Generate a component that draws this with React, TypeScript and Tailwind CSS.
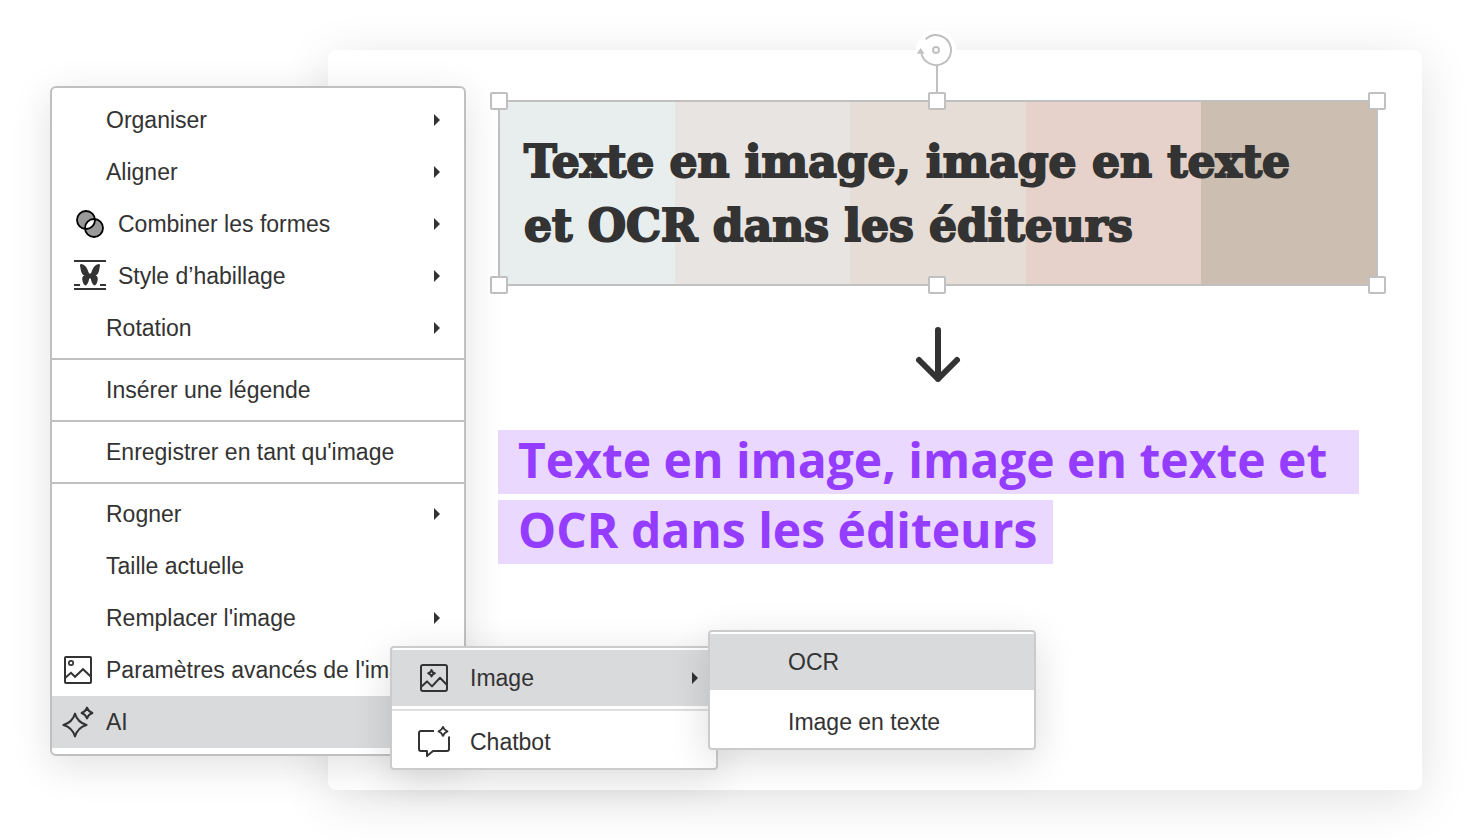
import type { ReactNode } from "react";

const STRIPES = ["bg-[#e8eeed]", "bg-[#e8e4e1]", "bg-[#e6ddd6]", "bg-[#e6d2cb]", "bg-[#ccbeb1]"];

const HANDLES = [
  "-top-[10px] -left-[10px]",
  "-top-[10px] left-[calc(50%-10px)]",
  "-top-[10px] -right-[10px]",
  "-bottom-[10px] -left-[10px]",
  "-bottom-[10px] left-[calc(50%-10px)]",
  "-bottom-[10px] -right-[10px]",
];

function CombineIcon() {
  return (
    <svg width="32" height="32" viewBox="0 0 32 32" aria-hidden="true">
      <circle cx="12" cy="12" r="9" fill="#999" />
      <circle cx="20" cy="20" r="9" fill="#999" />
      <path d="M11.1 20.9A9 9 0 0 1 20.9 11.1A9 9 0 0 1 11.1 20.9Z" fill="#fff" />
      <g fill="none" stroke="#000" strokeWidth="1.8">
        <circle cx="12" cy="12" r="9" />
        <circle cx="20" cy="20" r="9" />
      </g>
    </svg>
  );
}

function WrapIcon() {
  return (
    <svg width="32" height="32" viewBox="0 0 32 32" fill="#333" aria-hidden="true">
      <path d="M0 0h32v2H0zM0 28h32v2H0zM0 24h6v2H0zM26 24h6v2h-6z" />
      <path d="M14.6 12.6C13.4 8 10.5 4 7 4C5.4 4.2 6.1 6 6.5 8.2C7 11.6 7.8 14.6 10.4 15.2C8 16.2 8 18.5 8.5 20.8C9 23 10 25.6 11.5 25.6C13.5 24.6 15 21 15.2 18.4H16.8C17 21 18.5 24.6 20.5 25.6C22 25.6 23 23 23.5 20.8C24 18.5 24 16.2 21.6 15.2C24.2 14.6 25 11.6 25.5 8.2C25.9 6 26.6 4.2 25 4C21.5 4 18.6 8 17.4 12.6L16 14Z" />
    </svg>
  );
}

function PictureIcon() {
  return (
    <svg width="32" height="32" viewBox="0 0 32 32" fill="none" stroke="#333" strokeWidth="2" aria-hidden="true">
      <rect x="3" y="3" width="26" height="26" rx="1" />
      <circle cx="9" cy="9" r="2.2" strokeWidth="1.7" />
      <path d="M3 24L9 18.8L13 22.8L21 15.2L29 22.8" />
    </svg>
  );
}

function SparklesIcon() {
  return (
    <svg width="32" height="32" viewBox="0 0 32 32" fill="none" stroke="#333" strokeWidth="2" strokeLinejoin="round" aria-hidden="true">
      <path d="M13 7.6C14.8 13.8 17.8 17 24.6 19C17.8 21 14.8 24.2 13 30.4C11.2 24.2 8.2 21 1.4 19C8.2 17 11.2 13.8 13 7.6Z" />
      <path d="M25 1.6C26 4.6 27.4 6 30.4 7C27.4 8 26 9.4 25 12.4C24 9.4 22.6 8 19.6 7C22.6 6 24 4.6 25 1.6Z" />
    </svg>
  );
}

function AiPictureIcon() {
  return (
    <svg width="32" height="32" viewBox="0 0 32 32" fill="none" stroke="#333" strokeWidth="2" strokeLinejoin="round" aria-hidden="true">
      <rect x="3" y="3" width="26" height="26" rx="2" />
      <path d="M3 25L9 19.4L14 24.4L22 15.8L29 23" />
      <path d="M13.5 8C14 9.9 15 10.9 16.8 11.3C15 11.8 14 12.8 13.5 14.6C13 12.8 12 11.8 10.2 11.3C12 10.9 13 9.9 13.5 8Z" />
    </svg>
  );
}

function AiChatIcon() {
  return (
    <svg width="32" height="32" viewBox="0 0 32 32" fill="none" stroke="#333" strokeWidth="2" strokeLinejoin="round" aria-hidden="true">
      <path d="M16 5H3Q1 5 1 7V23Q1 25 3 25H9V30L15 25H29Q31 25 31 23V10.5" />
      <path d="M25 1C26 3.6 26.8 4.4 29.4 5.4C26.8 6.4 26 7.2 25 9.8C24 7.2 23.2 6.4 20.6 5.4C23.2 4.4 24 3.6 25 1Z" />
    </svg>
  );
}

function Caret() {
  return (
    <svg className="ml-auto shrink-0" width="6" height="12" viewBox="0 0 6 12" fill="#333" aria-hidden="true">
      <path d="M0 0L6 6L0 12Z" />
    </svg>
  );
}

type ItemProps = {
  label: string;
  icon?: ReactNode;
  caret?: boolean;
  indent?: boolean;
  active?: boolean;
};

function Item({ label, icon, caret, indent, active }: ItemProps) {
  return (
    <button
      type="button"
      role="menuitem"
      className={`flex h-[52px] w-full items-center gap-3 pr-6 text-left whitespace-nowrap ${indent ? "pl-[22px]" : "pl-[10px]"} ${active ? "bg-[#d9dadc]" : ""}`}
    >
      <span className="size-8 shrink-0">{icon}</span>
      <span>{label}</span>
      {caret && <Caret />}
    </button>
  );
}

function Separator() {
  return <li role="separator" className="my-1 h-[2px] bg-[#c0c0c0]" />;
}

function OcrMenu() {
  return (
    <ul
      role="menu"
      className="absolute -top-5 left-[316px] w-[328px] rounded border-2 border-[#cbcbcb] bg-white pt-[2px] shadow-[0_10px_40px_rgba(0,0,0,0.14)]"
    >
      <li>
        <button type="button" role="menuitem" className="flex h-14 w-full items-center bg-[#d9dadc] pl-[78px]">
          OCR
        </button>
      </li>
      <li className="mt-[6px]">
        <button type="button" role="menuitem" className="flex h-[52px] w-full items-center pl-[78px]">
          Image en texte
        </button>
      </li>
    </ul>
  );
}

function AiMenu() {
  return (
    <ul
      role="menu"
      className="absolute -top-[50px] left-[338px] w-[328px] rounded border-2 border-[#cbcbcb] bg-white pt-[2px] shadow-[0_10px_40px_rgba(0,0,0,0.14)]"
    >
      <li className="relative">
        <button type="button" role="menuitem" className="flex h-14 w-full items-center gap-5 bg-[#d9dadc] pr-[18px] pl-[26px]">
          <AiPictureIcon />
          <span>Image</span>
          <Caret />
        </button>
        <OcrMenu />
      </li>
      <li role="separator" className="mt-[3px] mb-[5px] h-[2px] bg-[#dedede]" />
      <li>
        <button type="button" role="menuitem" className="flex h-[52px] w-full items-center gap-5 pl-[26px]">
          <AiChatIcon />
          <span>Chatbot</span>
        </button>
      </li>
    </ul>
  );
}

function ContextMenu() {
  return (
    <ul
      role="menu"
      className="relative z-10 mt-9 w-[416px] shrink-0 self-start rounded-md border-2 border-[#c0c0c0] bg-white py-[6px] shadow-[0_10px_40px_rgba(0,0,0,0.12)]"
    >
      <li><Item label="Organiser" caret /></li>
      <li><Item label="Aligner" caret /></li>
      <li><Item label="Combiner les formes" icon={<CombineIcon />} indent caret /></li>
      <li><Item label="Style d’habillage" icon={<WrapIcon />} indent caret /></li>
      <li><Item label="Rotation" caret /></li>
      <Separator />
      <li><Item label="Insérer une légende" /></li>
      <Separator />
      <li><Item label="Enregistrer en tant qu'image" /></li>
      <Separator />
      <li><Item label="Rogner" caret /></li>
      <li><Item label="Taille actuelle" /></li>
      <li><Item label="Remplacer l'image" caret /></li>
      <li><Item label="Paramètres avancés de l'image" icon={<PictureIcon />} /></li>
      <li className="relative">
        <Item label="AI" icon={<SparklesIcon />} active />
        <AiMenu />
      </li>
    </ul>
  );
}

function SelectedImage() {
  return (
    <div className="relative border-2 border-[#c0c0c0]">
      <div className="absolute inset-0 grid grid-cols-5">
        {STRIPES.map((color) => (
          <div key={color} className={color} />
        ))}
      </div>
      <h1 className="relative pt-7 pb-[26px] pl-6 font-['DejaVu_Serif',serif] text-[44px] leading-[64px] font-bold whitespace-nowrap [-webkit-text-stroke:2px_#333]">
        Texte en image, image en texte
        <br />
        et OCR dans les éditeurs
      </h1>
      <svg
        className="absolute -top-[72px] left-[calc(50%-23px)]"
        width="42"
        height="66"
        viewBox="0 0 42 66"
        fill="none"
        stroke="#c0c0c0"
        strokeWidth="2"
        aria-hidden="true"
      >
        <circle cx="21" cy="20" r="20" fill="#fff" stroke="none" />
        <path d="M10.7 9.2A15 15 0 1 1 6.4 23.5" />
        <path d="M1.8 23.8L5.6 18L9.6 23.8Z" fill="#c0c0c0" stroke="none" />
        <circle cx="21" cy="20" r="3" />
        <path d="M22 36V66" />
      </svg>
      {HANDLES.map((place) => (
        <span key={place} className={`absolute size-[18px] rounded-[2px] border-2 border-[#c0c0c0] bg-white ${place}`} />
      ))}
    </div>
  );
}

export default function App() {
  return (
    <main className="flex min-h-screen bg-white p-[50px] font-['Liberation_Sans',Arial,sans-serif] text-[23px] leading-7 text-[#333]">
      <ContextMenu />
      <section className="-ml-[138px] min-w-0 flex-1 rounded-lg bg-white pt-[50px] pr-11 pb-12 pl-[170px] shadow-[0_10px_50px_rgba(0,0,0,0.12)]">
        <SelectedImage />
        <svg
          className="mx-auto mt-10 block"
          width="48"
          height="58"
          viewBox="0 0 48 58"
          fill="none"
          stroke="#333"
          strokeWidth="6"
          strokeLinecap="round"
          strokeLinejoin="round"
          aria-hidden="true"
        >
          <path d="M24 4V53M5 34L24 53L43 34" />
        </svg>
        <p className="mt-[46px] flex flex-col items-start gap-[6px] font-['Open_Sans',sans-serif] text-[48px] leading-[60px] font-bold whitespace-nowrap text-[#943cff]">
          <span className="bg-[#ead8ff] pr-8 pb-1 pl-5">Texte en image, image en texte et</span>
          <span className="bg-[#ead8ff] pr-4 pb-1 pl-5">OCR dans les éditeurs</span>
        </p>
      </section>
    </main>
  );
}
